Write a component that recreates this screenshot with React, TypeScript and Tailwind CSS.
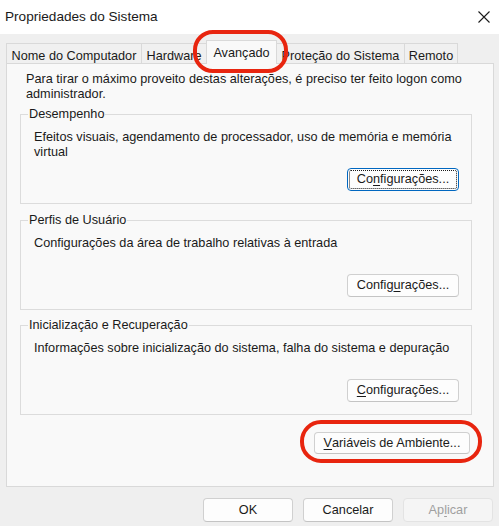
import React from 'react'

const tabs = [
  { label: 'Nome do Computador', w: 'w-[135px]' },
  { label: 'Hardware', w: 'w-[65px]' },
  { label: 'Avançado', w: 'w-[71px]', active: true },
  { label: 'Proteção do Sistema', w: 'w-[127px]' },
  { label: 'Remoto', w: 'w-[54px]' },
]

function Button({
  children,
  className = '',
  focused,
  disabled,
}: {
  children: React.ReactNode
  className?: string
  focused?: boolean
  disabled?: boolean
}) {
  return (
    <button
      className={
        'flex items-center justify-center rounded-[4px] border text-[12.7px] leading-none ' +
        (disabled
          ? 'border-[#e3e3e3] bg-[#f5f5f5] text-[#a0a0a0] '
          : focused
            ? 'border-[#0067c0] bg-[#fdfdfd] text-[#1a1a1a] outline-1 outline-dotted outline-[#1a1a1a] outline-offset-[-3px] '
            : 'border-[#d0d0d0] border-b-[#c4c4c4] bg-[#fdfdfd] text-[#1a1a1a] ') +
        className
      }
    >
      {children}
    </button>
  )
}

function Group({
  title,
  text,
  button,
  className = '',
}: {
  title: string
  text: string
  button: React.ReactNode
  className?: string
}) {
  return (
    <fieldset className={'border border-[#dcdcdc] ' + className}>
      <legend className="ml-[7px] px-[1px] text-[12.7px] leading-[15px]">{title}</legend>
      <div className="pl-[13px] pr-[12px] pt-[8px] pb-[12px]">
        <p className="h-[30px] text-[12.7px] leading-[15px]">{text}</p>
        <div className="mt-[8px] flex justify-end">{button}</div>
      </div>
    </fieldset>
  )
}

export default function App() {
  return (
    <div className="relative h-[526px] w-[499px] overflow-hidden bg-[#efefef] font-['Liberation_Sans',Arial,sans-serif] text-[#1a1a1a]">
      {/* Title bar */}
      <div className="flex h-[34px] items-center justify-between bg-white pl-[5px] pr-[9px]">
        <span className="text-[13.6px]">Propriedades do Sistema</span>
        <svg width="12" height="12" viewBox="0 0 12 12" className="text-[#1a1a1a]">
          <path d="M0.5 0.5 L11.5 11.5 M11.5 0.5 L0.5 11.5" stroke="currentColor" strokeWidth="1.1" />
        </svg>
      </div>

      {/* Tabs */}
      <div className="relative z-10 flex h-[29px] items-end pl-[6px]">
        {tabs.map((t, i) => (
          <div
            key={t.label}
            className={
              'flex justify-center border-t border-l border-[#d9d9d9] text-[12.7px] ' +
              t.w +
              (i === tabs.length - 1 ? ' border-r' : '') +
              (t.active
                ? ' -mb-px h-[24px] border-r bg-[#f9f9f9] pt-[3px]'
                : ' h-[20px] bg-[#f0f0f0] pt-[3px]') +
              (i === 3 ? ' border-l-0' : '')
            }
          >
            {t.label}
          </div>
        ))}
      </div>

      {/* Panel */}
      <div className="ml-[6px] mr-[5px] h-[424px] border border-[#d9d9d9] bg-[#f9f9f9] pl-[13px] pr-[21px] pt-[8px]">
        <p className="ml-[6px] text-[12.7px] leading-[15px]">
          Para tirar o máximo proveito destas alterações, é preciso ter feito logon como administrador.
        </p>

        <Group
          className="mt-[5px]"
          title="Desempenho"
          text="Efeitos visuais, agendamento de processador, uso de memória e memória virtual"
          button={
            <Button focused className="h-[23px] w-[112px]">
              Co<span className="underline underline-offset-2">n</span>figurações...
            </Button>
          }
        />
        <Group
          className="mt-[9px]"
          title="Perfis de Usuário"
          text="Configurações da área de trabalho relativas à entrada"
          button={
            <Button className="h-[23px] w-[112px]">
              Config<span className="underline underline-offset-2">u</span>rações...
            </Button>
          }
        />
        <Group
          className="mt-[8px]"
          title="Inicialização e Recuperação"
          text="Informações sobre inicialização do sistema, falha do sistema e depuração"
          button={
            <Button className="h-[23px] w-[112px]">
              <span className="underline underline-offset-2">C</span>onfigurações...
            </Button>
          }
        />

        <div className="mt-[17px] flex justify-end pr-[2px]">
          <Button className="h-[22px] w-[156px]">
            <span className="underline underline-offset-2">V</span>ariáveis de Ambiente...
          </Button>
        </div>
      </div>

      {/* Dialog buttons */}
      <div className="mt-[11px] flex justify-end gap-[10px] pr-[6px]">
        <Button className="h-[24px] w-[90px]">OK</Button>
        <Button className="h-[24px] w-[90px]">Cancelar</Button>
        <Button disabled className="h-[24px] w-[90px]">
          Ap<span className="underline underline-offset-2">l</span>icar
        </Button>
      </div>

      {/* Red annotation marks */}
      <div className="pointer-events-none absolute left-[193px] top-[30px] z-20 h-[43px] w-[95px] rounded-[20px] border-[4px] border-[#e8250f]" />
      <div className="pointer-events-none absolute left-[300px] top-[420px] z-20 h-[43px] w-[182px] rounded-[21px] border-[4px] border-[#e8250f]" />
    </div>
  )
}
